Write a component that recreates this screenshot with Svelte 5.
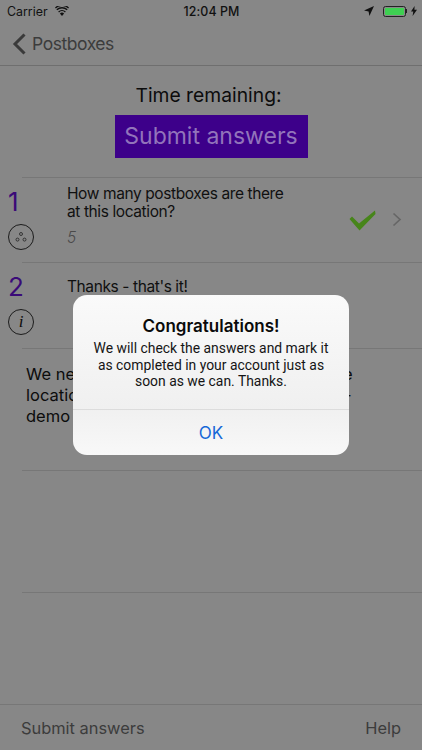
<script>
  const questions = [
    { n: 1, lines: ['How many postboxes are there', 'at this location?'], answer: '5', kind: 'dots', done: true },
    { n: 2, lines: ["Thanks - that's it!"], kind: 'info' }
  ];
</script>

<div class="screen">
  <header class="status">
    <div class="left">
      <span>Carrier</span>
      <svg class="wifi" width="14" height="10" viewBox="0 0 14 10"><path d="M7 10 4.9 7.6a3 3 0 0 1 4.2 0Z" fill="#111"/><path d="M3.6 6.2a5 5 0 0 1 6.8 0M1.8 4.1a7.6 7.6 0 0 1 10.4 0M.4 2.2a9.7 9.7 0 0 1 13.2 0" transform="translate(0 -.3)" fill="none" stroke="#111" stroke-width="1.3"/></svg>
    </div>
    <div class="time">12:04 PM</div>
    <div class="right">
      <svg width="10" height="10" viewBox="0 0 10 10"><path d="M10 0 0 4.6l4.6.8.8 4.6Z" fill="#111"/></svg>
      <div class="battery"><i></i></div><b></b>
      <svg width="6" height="10" viewBox="0 0 6 10"><path d="M3.6 0 0 5.6h2.3L1.6 10 6 3.8H3.4Z" fill="#111"/></svg>
    </div>
  </header>

  <nav class="nav">
    <svg width="15" height="22" viewBox="0 0 15 22"><path d="M12.5 1.5 3 11l9.5 9.5" fill="none" stroke="#3a3a3a" stroke-width="3"/></svg>
    <span>Postboxes</span>
  </nav>

  <section class="head">
    <div class="remaining">Time remaining:</div>
    <div class="submit">Submit answers</div>
  </section>

  {#each questions as q}
    <div class="row" class:first={q.n === 1}>
      <div class="side">
        <div class="num">{q.n}</div>
        <div class="badge">
          {#if q.kind === 'dots'}
            <svg width="14" height="12" viewBox="0 0 14 12" fill="none" stroke="#222" stroke-width=".8"><circle cx="7" cy="3" r="1.5"/><circle cx="3.5" cy="8.6" r="1.5"/><circle cx="10.5" cy="8.6" r="1.5"/></svg>
          {:else}
            <span class="i">i</span>
          {/if}
        </div>
      </div>
      <div class="body">
        {#each q.lines as l}<div>{l}</div>{/each}
        {#if q.answer}<div class="answer">{q.answer}</div>{/if}
      </div>
      {#if q.done}
        <svg class="check" width="28" height="22" viewBox="0 0 28 22"><path d="M.5 9 3 6.5l7 7L26 .5l.5 3.5-16 16.5Z" fill="#47851a"/></svg>
        <svg class="chev" width="10" height="15" viewBox="0 0 10 15"><path d="M1.5 1.5 8 7.5l-6.5 6" fill="none" stroke="#666" stroke-width="1.7"/></svg>
      {/if}
    </div>
  {/each}

  <div class="note">We need you to count all postboxes at the<br />location and enter the number now. This -<br />demo project.</div>
  <div class="blank"></div>
  <div class="spacer"></div>

  <footer class="toolbar">
    <span>Submit answers</span>
    <span>Help</span>
  </footer>

  <div class="overlay">
    <div class="alert">
      <div class="msg">
        <h2>Congratulations!</h2>
        <p>We will check the answers and mark it as completed in your account just as soon as we can. Thanks.</p>
      </div>
      <div class="ok">OK</div>
    </div>
  </div>
</div>

<style>
  :global(body) { margin: 0; background: #878787; }
  .screen {
    position: relative;
    width: 422px;
    height: 750px;
    overflow: hidden;
    display: flex;
    flex-direction: column;
    background: #878787;
    color: #0c0c0c;
    font-family: Inter, "Liberation Sans", sans-serif;
  }
  .status {
    height: 22px;
    display: flex;
    align-items: center;
    justify-content: space-between;
    padding: 0 5px 0 7px;
    font-size: 12.4px;
    color: #111;
    position: relative;
  }
  .left { display: flex; align-items: center; gap: 7px; }
  .time { position: absolute; left: 1px; right: 0; text-align: center; font-weight: 500; font-size: 12.4px; letter-spacing: .1px; }
  .right { display: flex; align-items: center; }
  .battery { width: 23px; height: 11px; border: 1px solid #222; border-radius: 2.5px; padding: 1px; box-sizing: border-box; margin-left: 9px; }
  .battery i { display: block; height: 100%; background: #3fcf52; border-radius: 1px; }
  .right b { width: 1.5px; height: 4px; background: #222; margin-right: 4px; }
  .nav {
    height: 43px;
    display: flex;
    align-items: center;
    gap: 5px;
    padding-left: 12px;
    border-bottom: 1px solid #6f6f6f;
    color: #3c3c3c;
    font-size: 17.5px;
    letter-spacing: -.45px;
  }
  .head { display: flex; flex-direction: column; align-items: center; padding-top: 17px; height: 94px; }
  .remaining { font-size: 19.3px; line-height: 25px; margin-right: 5px; }
  .submit {
    margin-top: 7px;
    width: 193px;
    height: 43px;
    line-height: 43px;
    text-align: center;
    background: #3d008a;
    color: #9274bb;
    font-size: 23px;
  }
  .row {
    height: 85px;
    margin-left: 22px;
    border-top: 1px solid #777;
    display: flex;
    align-items: flex-start;
    position: relative;
  }
  .row.first { height: 84px; }
  .side { width: 59px; flex: none; margin-left: -14px; }
  .num { font-size: 26px; line-height: 30px; color: #3a0a78; margin-top: 9px; }
  .badge {
    width: 24px; height: 24px; border: 1px solid #1c1c1c; border-radius: 50%;
    display: flex; align-items: center; justify-content: center; margin-top: 7px;
  }
  .i { font-family: "Liberation Serif", serif; font-style: italic; font-size: 17px; }
  .body { font-size: 15.5px; letter-spacing: -.4px; line-height: 18px; margin-top: 15px; color: #101010; }
  .first .body { margin-top: 7px; }
  .answer { font-style: italic; font-weight: 300; color: #4a4a4a; margin-top: 8px; }
  .check { position: absolute; left: 327px; top: 32px; }
  .chev { position: absolute; left: 370px; top: 34px; }
  .note {
    height: 122px;
    margin-left: 22px;
    border-top: 1px solid #777;
    padding: 15px 0 0 4px;
    box-sizing: border-box;
    font-size: 16.5px;
    line-height: 21px;
  }
  .blank { height: 122px; margin-left: 22px; border-top: 1px solid #777; box-sizing: border-box; }
  .spacer { flex: 1; margin-left: 22px; border-top: 1px solid #777; }
  .toolbar {
    height: 45px;
    border-top: 1px solid #777;
    display: flex;
    align-items: center;
    justify-content: space-between;
    padding: 0 21px;
    color: #3c3c3c;
    font-size: 16.4px;
  }
  .overlay { position: absolute; inset: 0; display: flex; align-items: center; justify-content: center; }
  .alert {
    width: 276px;
    height: 160px;
    border-radius: 14px;
    overflow: hidden;
    background: linear-gradient(#fafafa, #f0f0f0 70%, #f8f8f8);
    display: flex;
    flex-direction: column;
    text-align: center;
  }
  .msg { height: 115px; box-sizing: border-box; padding: 20px 20px 0; border-bottom: 1px solid #dcdcdc; }
  h2 { margin: 0; font-size: 17px; line-height: 22px; font-weight: 600; color: #0a0a0a; }
  p { margin: 3px 0 0; font-family: Roboto, sans-serif; font-size: 13.9px; line-height: 16.5px; color: #151515; }
  .ok { flex: 1; display: flex; align-items: center; justify-content: center; color: #1668d8; font-size: 17px; }
</style>
